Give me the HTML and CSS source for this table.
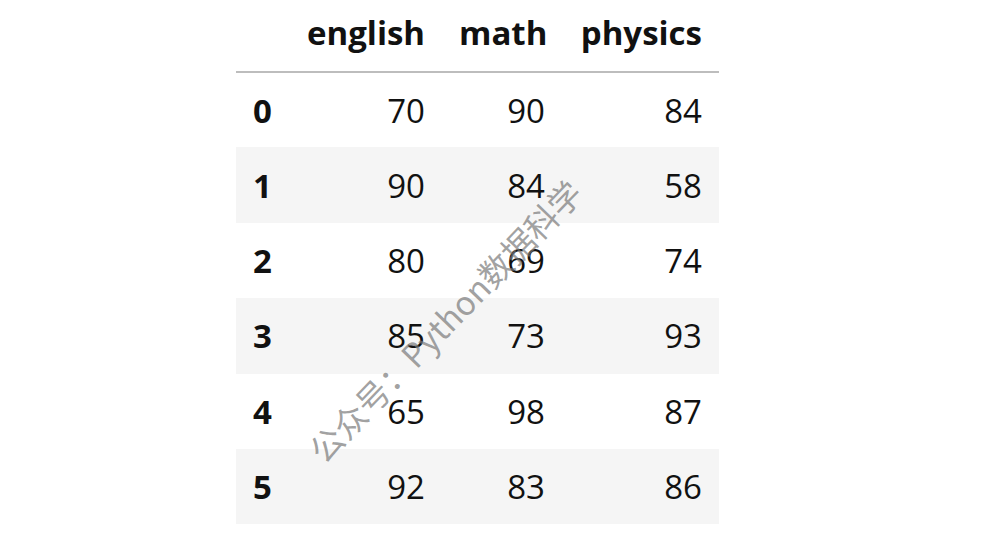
FILE: index.html
```html
<!DOCTYPE html>
<html>
<head>
<meta charset="utf-8">
<link rel="stylesheet" href="styles.css">
</head>
<body>
<div class="page">
  <table class="df">
    <colgroup>
      <col class="c-idx"><col class="c-eng"><col class="c-math"><col class="c-phy">
    </colgroup>
    <thead>
      <tr><th></th><th>english</th><th>math</th><th>physics</th></tr>
    </thead>
    <tbody>
      <tr><th>0</th><td>70</td><td>90</td><td>84</td></tr>
      <tr><th>1</th><td>90</td><td>84</td><td>58</td></tr>
      <tr><th>2</th><td>80</td><td>69</td><td>74</td></tr>
      <tr><th>3</th><td>85</td><td>73</td><td>93</td></tr>
      <tr><th>4</th><td>65</td><td>98</td><td>87</td></tr>
      <tr><th>5</th><td>92</td><td>83</td><td>86</td></tr>
    </tbody>
  </table>
  <div class="watermark">公众号：Python数据科学</div>
</div>
</body>
</html>
```
FILE: styles.css
```css
html, body {
  margin: 0;
  padding: 0;
  background: #ffffff;
}
.page {
  position: relative;
  width: 983px;
  height: 549px;
  overflow: hidden;
}
.df {
  margin-left: 236px;
  border-collapse: collapse;
  border-spacing: 0;
  table-layout: fixed;
  width: 483px;
  font-family: "Open Sans", "Noto Sans", sans-serif;
  font-size: 33px;
  color: #111111;
}
.c-idx { width: 54px; }
.c-eng { width: 152px; }
.c-math { width: 120px; }
.c-phy { width: 157px; }
.df th, .df td {
  padding: 0 17px;
  text-align: right;
  white-space: nowrap;
}
.df thead tr {
  height: 72px;
}
.df thead th {
  font-weight: 700;
  border-bottom: 2px solid #bdbdbd;
  padding-bottom: 6px;
  vertical-align: middle;
}
.df tbody th {
  text-align: left;
  font-weight: 700;
}
.df tbody tr {
  height: 75.4px;
}
.df tbody tr:nth-child(even) {
  background: #f5f5f5;
}
.watermark {
  position: absolute;
  left: 445px;
  top: 321px;
  transform: translate(-50%, -50%) rotate(-46deg);
  font-family: "Noto Sans CJK SC", sans-serif;
  font-size: 33px;
  color: rgba(120, 120, 120, 0.7);
  white-space: nowrap;
  line-height: 1;
}
```
